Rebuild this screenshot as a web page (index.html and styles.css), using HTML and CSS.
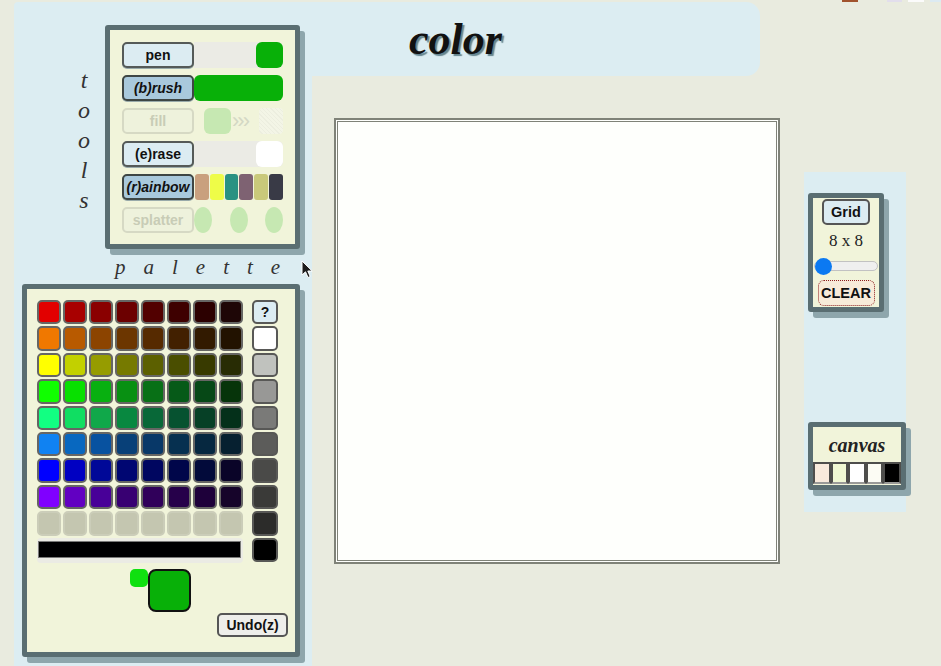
FILE: index.html
```html
<!DOCTYPE html>
<html>
<head>
<meta charset="utf-8">
<title>color</title>
<link rel="stylesheet" href="styles.css">
</head>
<body>
<div class="page">
  <div class="left">
    <div class="tools-area">
      <div class="tools-label"><span>t</span><span>o</span><span>o</span><span>l</span><span>s</span></div>
      <div class="panel tools">
        <div class="row">
          <button class="btn">pen</button>
          <div class="track"><span class="sq green"></span></div>
        </div>
        <div class="row">
          <button class="btn sel">(b)rush</button>
          <div class="bar-green"></div>
        </div>
        <div class="row">
          <button class="btn off">fill</button>
          <div class="fill-track"><span class="sq faded"></span><span class="chev">›››</span><span class="hatch"></span></div>
        </div>
        <div class="row">
          <button class="btn">(e)rase</button>
          <div class="track"><span class="sq white"></span></div>
        </div>
        <div class="row">
          <button class="btn sel">(r)ainbow</button>
          <div class="rainbow">
            <span class="rb rb1"></span><span class="rb rb2"></span><span class="rb rb3"></span><span class="rb rb4"></span><span class="rb rb5"></span><span class="rb rb6"></span>
          </div>
        </div>
        <div class="row">
          <button class="btn off">splatter</button>
          <div class="splat"><span class="oval"></span><span class="oval"></span><span class="oval"></span></div>
        </div>
      </div>
    </div>
    <div class="palette-label">palette</div>
    <div class="panel palette">
      <div class="pal-top">
        <div class="pal-main">
          <div class="grid">
            <span class="cell" style="background:#e20000"></span><span class="cell" style="background:#a80000"></span><span class="cell" style="background:#8a0000"></span><span class="cell" style="background:#6c0000"></span><span class="cell" style="background:#520000"></span><span class="cell" style="background:#3e0000"></span><span class="cell" style="background:#2c0000"></span><span class="cell" style="background:#1e0606"></span>
            <span class="cell" style="background:#f07800"></span><span class="cell" style="background:#b85a00"></span><span class="cell" style="background:#8c4400"></span><span class="cell" style="background:#6c3600"></span><span class="cell" style="background:#562a00"></span><span class="cell" style="background:#422000"></span><span class="cell" style="background:#321a00"></span><span class="cell" style="background:#221200"></span>
            <span class="cell" style="background:#ffff00"></span><span class="cell" style="background:#c2d000"></span><span class="cell" style="background:#969c00"></span><span class="cell" style="background:#767a00"></span><span class="cell" style="background:#5c6000"></span><span class="cell" style="background:#4a4e00"></span><span class="cell" style="background:#383a00"></span><span class="cell" style="background:#282c04"></span>
            <span class="cell" style="background:#10ff00"></span><span class="cell" style="background:#08e000"></span><span class="cell" style="background:#08b010"></span><span class="cell" style="background:#089012"></span><span class="cell" style="background:#087016"></span><span class="cell" style="background:#065a18"></span><span class="cell" style="background:#064816"></span><span class="cell" style="background:#06340a"></span>
            <span class="cell" style="background:#12ff82"></span><span class="cell" style="background:#10de62"></span><span class="cell" style="background:#10a84a"></span><span class="cell" style="background:#088840"></span><span class="cell" style="background:#086838"></span><span class="cell" style="background:#065230"></span><span class="cell" style="background:#064026"></span><span class="cell" style="background:#04301a"></span>
            <span class="cell" style="background:#1082f2"></span><span class="cell" style="background:#0868c0"></span><span class="cell" style="background:#0852a0"></span><span class="cell" style="background:#084078"></span><span class="cell" style="background:#083868"></span><span class="cell" style="background:#063050"></span><span class="cell" style="background:#062840"></span><span class="cell" style="background:#062030"></span>
            <span class="cell" style="background:#0000ff"></span><span class="cell" style="background:#0000c2"></span><span class="cell" style="background:#000898"></span><span class="cell" style="background:#000672"></span><span class="cell" style="background:#000660"></span><span class="cell" style="background:#00064a"></span><span class="cell" style="background:#020a3a"></span><span class="cell" style="background:#0a0428"></span>
            <span class="cell" style="background:#8000ff"></span><span class="cell" style="background:#6200c2"></span><span class="cell" style="background:#480098"></span><span class="cell" style="background:#380072"></span><span class="cell" style="background:#30005a"></span><span class="cell" style="background:#26004a"></span><span class="cell" style="background:#1e003a"></span><span class="cell" style="background:#16042a"></span>
            <span class="cell empty"></span><span class="cell empty"></span><span class="cell empty"></span><span class="cell empty"></span><span class="cell empty"></span><span class="cell empty"></span><span class="cell empty"></span><span class="cell empty"></span>
          </div>
          <div class="tray"><div class="black-bar"></div></div>
        </div>
        <div class="grays">
          <button class="gcell q">?</button>
          <span class="gcell" style="background:#ffffff"></span>
          <span class="gcell" style="background:#c0c2be"></span>
          <span class="gcell" style="background:#989896"></span>
          <span class="gcell" style="background:#7a7a78"></span>
          <span class="gcell" style="background:#5c5c5a"></span>
          <span class="gcell" style="background:#4a4a48"></span>
          <span class="gcell" style="background:#3a3a38"></span>
          <span class="gcell" style="background:#2c2c2a"></span>
          <span class="gcell" style="background:#000000"></span>
        </div>
      </div>
      <div class="current">
        <span class="cur-small"></span>
        <span class="cur-big"></span>
      </div>
      <button class="undo">Undo(z)</button>
    </div>
    <svg class="cursor" width="13" height="19" viewBox="0 0 13 19"><path d="M1 1 L1 15 L4.5 11.8 L7 17.5 L9.2 16.5 L6.8 11 L11.2 11 Z" fill="#1c1c1c" stroke="#ffffff" stroke-width="1"/></svg>
  </div>
  <div class="main">
    <div class="header"><h1 class="title">color</h1></div>
    <div class="canvas"></div>
  </div>
  <div class="side">
    <div class="panel gridpanel">
      <button class="gridbtn">Grid</button>
      <div class="size">8 x 8</div>
      <input class="slider" type="range" min="1" max="32" value="1">
      <button class="clear">CLEAR</button>
    </div>
    <div class="panel canvaspanel">
      <div class="canvas-title">canvas</div>
      <div class="swatches">
        <span class="sw sw1"></span><span class="sw sw2"></span><span class="sw sw3"></span><span class="sw sw4"></span><span class="sw sw5"></span>
      </div>
    </div>
  </div>
  <div class="topbits"><span class="tb tb1"></span><span class="tb tb2"></span><span class="tb tb3"></span><span class="tb tb4"></span></div>
</div>
</body>
</html>
```
FILE: styles.css
```css
* { box-sizing: border-box; }
html, body { margin: 0; padding: 0; }
body {
  background: #e9ebdf;
  width: 941px;
  height: 666px;
  overflow: hidden;
  font-family: "Liberation Sans", Arial, sans-serif;
}
.page {
  position: relative;
  display: flex;
  align-items: flex-start;
  padding: 2px 0 0 14px;
  height: 666px;
}
.left {
  position: relative;
  width: 298px;
  height: 664px;
  background: #dcedf2;
  border-top-left-radius: 4px;
  flex: none;
}
.panel {
  background: #f1f4da;
  border: 5px solid #5a6e72;
  border-radius: 3px;
  box-shadow: 5px 6px 0 #8ea6ac;
}
.tools-area {
  display: flex;
  padding-top: 23px;
}
.tools-label {
  width: 24px;
  margin: 0 9px 0 58px;
  padding-top: 40px;
  display: flex;
  flex-direction: column;
  align-items: center;
  font-family: "Liberation Serif", "Times New Roman", serif;
  font-style: italic;
  font-size: 24px;
  line-height: 30px;
  color: #333;
}
.tools {
  width: 195px;
  height: 224px;
  padding: 12px;
  display: flex;
  flex-direction: column;
  gap: 7px;
}
.row {
  display: flex;
  height: 26px;
}
.btn {
  width: 72px;
  height: 26px;
  flex: none;
  margin: 0;
  padding: 0;
  border: 2px solid #555a58;
  border-radius: 5px;
  background: #dcecf2;
  font-family: "Liberation Sans", Arial, sans-serif;
  font-weight: bold;
  font-size: 14px;
  color: #111;
  box-shadow: 0 1px 0 #9aa;
}
.btn.sel {
  background: #a9c9dc;
  font-style: italic;
  border-color: #3e4644;
}
.btn.off {
  background: #eef2dc;
  border-color: #d6d9c4;
  color: #c8ccb6;
  box-shadow: none;
}
.track {
  flex: 1;
  display: flex;
  justify-content: flex-end;
  background: #ebebe5;
  border-radius: 0 5px 5px 0;
}
.sq {
  width: 27px;
  height: 26px;
  border-radius: 6px;
}
.sq.green { background: #08b008; }
.sq.white { background: #ffffff; }
.bar-green {
  flex: 1;
  background: #08b008;
  border-radius: 6px;
}
.fill-track {
  flex: 1;
  display: flex;
  align-items: center;
  padding-left: 10px;
}
.sq.faded { background: #c6e8b2; }
.chev {
  width: 28px;
  color: #d4d8c4;
  font-size: 22px;
  letter-spacing: -2px;
  line-height: 26px;
  padding-left: 1px;
}
.hatch {
  flex: 1;
  height: 26px;
  border-radius: 4px;
  background: repeating-linear-gradient(45deg, #f3f5e6 0 2px, #eceedf 2px 3px);
}
.rainbow {
  flex: 1;
  display: flex;
  gap: 1px;
  padding-left: 1px;
}
.rb { flex: 1; border-radius: 3px; }
.rb1 { background: #c9a07e; }
.rb2 { background: #eefc48; }
.rb3 { background: #2a9282; }
.rb4 { background: #7e6272; }
.rb5 { background: #c9c97a; }
.rb6 { background: #393a46; }
.splat {
  flex: 1;
  display: flex;
  justify-content: space-between;
}
.oval {
  width: 18px;
  height: 26px;
  border-radius: 50%;
  background: #c6e8b2;
}
.palette-label {
  margin-top: 6px;
  height: 24px;
  padding-left: 101px;
  font-family: "Liberation Serif", "Times New Roman", serif;
  font-style: italic;
  font-size: 21px;
  line-height: 24px;
  letter-spacing: 18px;
  color: #333;
}
.palette {
  margin: 5px 0 0 8px;
  width: 278px;
  height: 373px;
  padding: 11px 7px 0 10px;
  display: flex;
  flex-direction: column;
}
.pal-top {
  display: flex;
  gap: 9px;
}
.pal-main { width: 206px; }
.grid {
  display: grid;
  grid-template-columns: repeat(8, 24px);
  grid-auto-rows: 24.4px;
  gap: 2px;
}
.cell {
  display: block;
  border: 2px solid #666664;
  border-radius: 5px;
}
.cell.empty {
  background: #c4c6b0;
  border-color: #cbcdb9;
}
.tray {
  margin-top: 2px;
  height: 25px;
  background: #ebebe4;
  border-radius: 4px;
  padding: 3px 2px 0 1px;
}
.black-bar {
  height: 17px;
  background: #000;
  border: 1px solid #7a7a78;
}
.grays {
  display: flex;
  flex-direction: column;
  gap: 2px;
  width: 26px;
}
.gcell {
  display: block;
  height: 24.4px;
  border: 2px solid #585856;
  border-radius: 5px;
}
.gcell.q {
  margin: 0;
  padding: 0;
  background: #dcecf2;
  font-family: "Liberation Sans", Arial, sans-serif;
  font-weight: bold;
  font-size: 14px;
  color: #111;
}
.current {
  display: flex;
  justify-content: center;
  align-items: flex-start;
  margin-top: 6px;
  padding-right: 4px;
}
.cur-small {
  width: 18px;
  height: 18px;
  background: #10e010;
  border-radius: 5px;
}
.cur-big {
  width: 43px;
  height: 43px;
  background: #08b008;
  border: 2px solid #111;
  border-radius: 8px;
}
.undo {
  align-self: flex-end;
  margin: 1px 0 0 0;
  width: 71px;
  height: 24px;
  padding: 0;
  border: 2px solid #555;
  border-radius: 5px;
  background: #eeeeea;
  font-family: "Liberation Sans", Arial, sans-serif;
  font-weight: bold;
  font-size: 14px;
  color: #111;
}
.cursor {
  position: absolute;
  left: 287px;
  top: 258px;
}
.main {
  width: 492px;
  flex: none;
}
.header {
  width: 448px;
  height: 74px;
  background: #dcedf2;
  border-radius: 0 14px 14px 0;
  padding-left: 97px;
  padding-top: 1px;
}
.title {
  margin: 0;
  font-family: "Liberation Serif", "Times New Roman", serif;
  font-weight: bold;
  font-style: italic;
  font-size: 44px;
  line-height: 74px;
  color: #111;
  text-shadow: 2px 2px 1px #65858f;
}
.canvas {
  margin: 42px 0 0 22px;
  width: 446px;
  height: 446px;
  background: #fefffc;
  border: 2px solid #7f8278;
  box-shadow: inset 0 0 0 1px #fefffc, inset 0 0 0 2px #7f8278;
}
.side {
  width: 102px;
  height: 340px;
  margin-top: 170px;
  background: #dcedf2;
  flex: none;
  padding: 21px 0 0 4px;
}
.gridpanel {
  width: 76px;
  height: 119px;
  display: flex;
  flex-direction: column;
  align-items: center;
  padding-top: 1px;
}
.gridbtn {
  width: 48px;
  height: 26px;
  margin: 0;
  padding: 0;
  border: 2px solid #555;
  border-radius: 5px;
  background: #dcecf2;
  font-family: "Liberation Sans", Arial, sans-serif;
  font-weight: bold;
  font-size: 14.5px;
  color: #111;
}
.size {
  margin-top: 3px;
  height: 26px;
  line-height: 26px;
  font-family: "Liberation Serif", "Times New Roman", serif;
  font-size: 17px;
  color: #222;
}
.slider {
  -webkit-appearance: none;
  appearance: none;
  margin: 4px 0 0 0;
  width: 64px;
  height: 16px;
  background: transparent;
}
.slider::-webkit-slider-runnable-track {
  height: 10px;
  background: #efefef;
  border: 1px solid #c2c2c2;
  border-radius: 5px;
}
.slider::-webkit-slider-thumb {
  -webkit-appearance: none;
  width: 17px;
  height: 17px;
  margin-top: -4.5px;
  border-radius: 50%;
  background: #0b79f2;
  border: none;
}
.clear {
  margin: 6px 0 0 0;
  width: 57px;
  height: 26px;
  padding: 0;
  border: 1px dotted #8a1c1c;
  border-radius: 6px;
  background: #f8ebd9;
  font-family: "Liberation Sans", Arial, sans-serif;
  font-weight: bold;
  font-size: 14.5px;
  color: #111;
}
.canvaspanel {
  margin-top: 110px;
  width: 98px;
  height: 68px;
  padding-top: 3px;
}
.canvas-title {
  height: 30px;
  line-height: 30px;
  text-align: center;
  font-family: "Liberation Serif", "Times New Roman", serif;
  font-weight: bold;
  font-style: italic;
  font-size: 20px;
  color: #222;
}
.swatches {
  margin-top: 2px;
  display: flex;
  height: 22px;
}
.sw {
  flex: 1;
  border: 2px solid #4e4e4c;
  border-bottom-color: #9a9a98;
}
.sw1 { background: #f8eadc; }
.sw2 { background: #f0f8d4; }
.sw3 { background: #ffffff; }
.sw4 { background: #fcfcf4; }
.sw5 { background: #000000; }
.topbits {
  position: absolute;
  top: 0;
  left: 842px;
  display: flex;
  height: 2px;
}
.tb { height: 2px; display: block; }
.tb1 { width: 16px; background: #a0522d; margin-right: 29px; }
.tb2 { width: 15px; background: #e2deec; margin-right: 6px; }
.tb3 { width: 16px; background: #fbfbfb; margin-right: 6px; }
.tb4 { width: 11px; background: #dceaf2; }
```
